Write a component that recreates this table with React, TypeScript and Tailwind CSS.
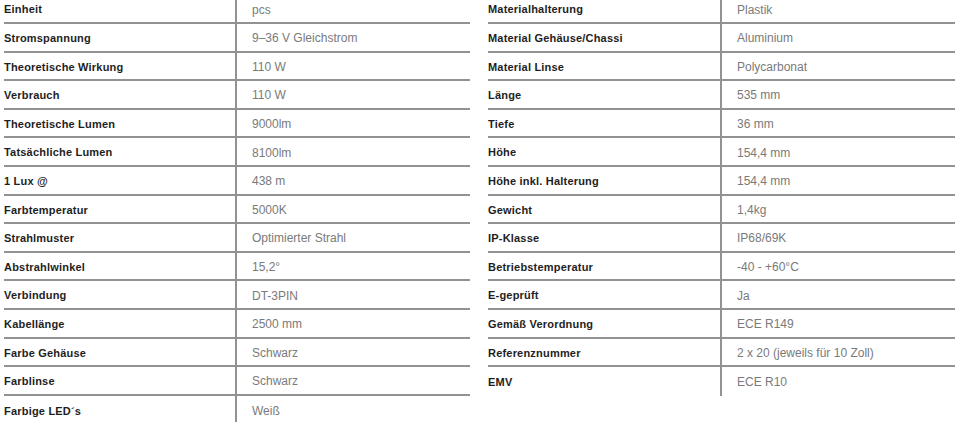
import React from "react";

const left: [string, string][] = [
  ["Einheit", "pcs"],
  ["Stromspannung", "9–36 V Gleichstrom"],
  ["Theoretische Wirkung", "110 W"],
  ["Verbrauch", "110 W"],
  ["Theoretische Lumen", "9000lm"],
  ["Tatsächliche Lumen", "8100lm"],
  ["1 Lux @", "438 m"],
  ["Farbtemperatur", "5000K"],
  ["Strahlmuster", "Optimierter Strahl"],
  ["Abstrahlwinkel", "15,2°"],
  ["Verbindung", "DT-3PIN"],
  ["Kabellänge", "2500 mm"],
  ["Farbe Gehäuse", "Schwarz"],
  ["Farblinse", "Schwarz"],
  ["Farbige LED´s", "Weiß"],
];

const right: [string, string][] = [
  ["Materialhalterung", "Plastik"],
  ["Material Gehäuse/Chassi", "Aluminium"],
  ["Material Linse", "Polycarbonat"],
  ["Länge", "535 mm"],
  ["Tiefe", "36 mm"],
  ["Höhe", "154,4 mm"],
  ["Höhe inkl. Halterung", "154,4 mm"],
  ["Gewicht", "1,4kg"],
  ["IP-Klasse", "IP68/69K"],
  ["Betriebstemperatur", "-40 - +60°C"],
  ["E-geprüft", "Ja"],
  ["Gemäß Verordnung", "ECE R149"],
  ["Referenznummer", "2 x 20 (jeweils für 10 Zoll)"],
  ["EMV", "ECE R10"],
];

function Table({ rows, labelW, width }: { rows: [string, string][]; labelW: string; width: string }) {
  return (
    <div className={`flex flex-col ${width}`}>
      {rows.map(([k, v], i) => (
        <div
          key={k}
          className={`flex h-[28.6px] ${i < rows.length - 1 ? "border-b-2 border-[#929292]" : ""}`}
        >
          <div className={`${labelW} flex items-center pt-[2px] text-[11px] font-bold tracking-[0.2px] text-[#1e1e1e]`}>{k}</div>
          <div className="flex-1 flex items-center pt-[2px] border-l-2 border-[#929292] pl-[15px] text-[12px] text-[#7a7a7a]">
            {v}
          </div>
        </div>
      ))}
    </div>
  );
}

export default function App() {
  return (
    <div
      className="w-[960px] h-[422px] overflow-hidden bg-white"
      style={{ fontFamily: '"Liberation Sans", Arial, sans-serif' }}
    >
      <div className="flex mt-[-4.6px] ml-[4px] gap-[18px]">
        <Table rows={left} labelW="w-[231px]" width="w-[466px]" />
        <Table rows={right} labelW="w-[232px]" width="w-[467px]" />
      </div>
    </div>
  );
}
